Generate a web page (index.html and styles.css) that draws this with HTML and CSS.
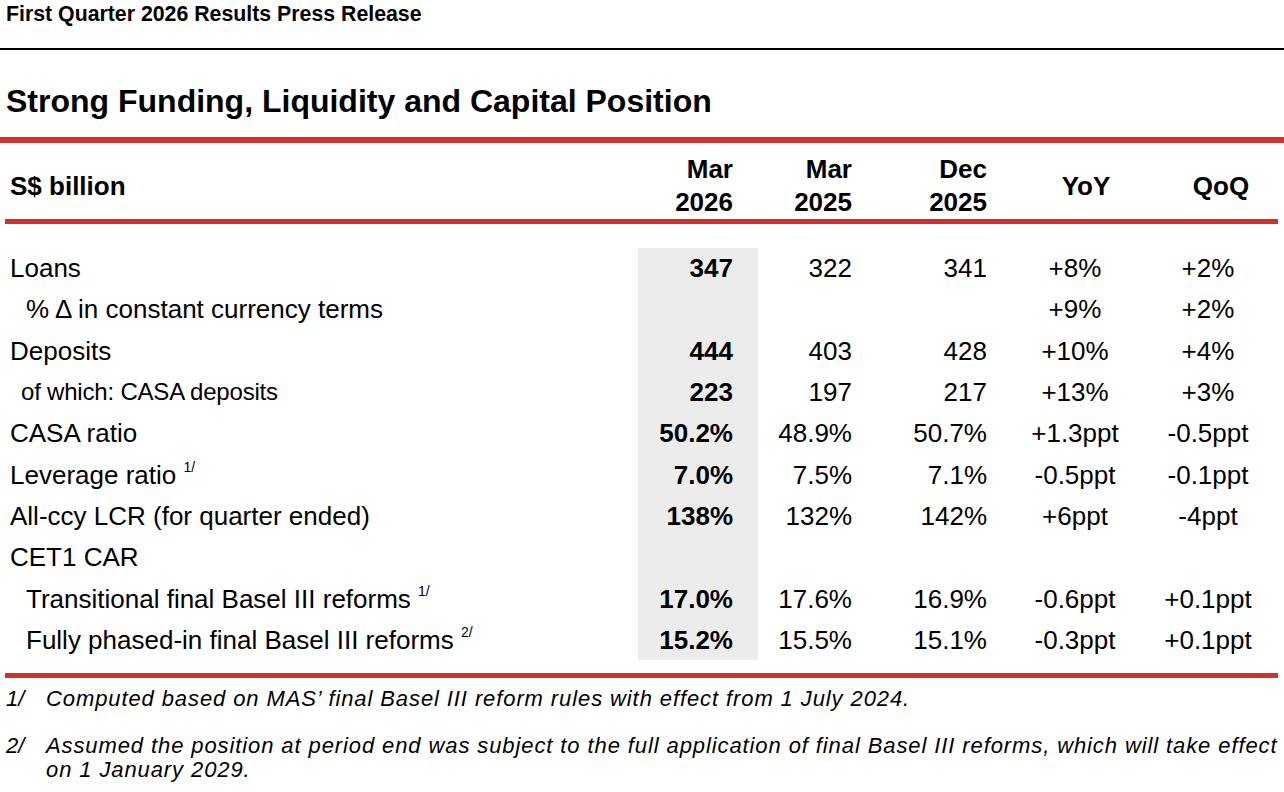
FILE: index.html
```html
<!DOCTYPE html>
<html lang="en">
<head>
    <meta charset="UTF-8">
    <meta name="viewport" content="width=device-width, initial-scale=1.0">
    <title>Strong Funding, Liquidity and Capital Position</title>
    <link rel="stylesheet" href="styles.css">
</head>
<body>
    <div class="doc-header">First Quarter 2026 Results Press Release</div>

    <h1 class="title">Strong Funding, Liquidity and Capital Position</h1>

    <table class="results">
        <thead>
            <tr>
                <th class="label">S$ billion</th>
                <th class="num hl">Mar<br>2026</th>
                <th class="num">Mar<br>2025</th>
                <th class="num wide">Dec<br>2025</th>
                <th class="chg yoy">YoY</th>
                <th class="chg qoq">QoQ</th>
            </tr>
        </thead>
        <tbody>
            <tr class="spacer"><td colspan="6"></td></tr>
            <tr>
                <td class="label">Loans</td>
                <td class="num hl">347</td>
                <td class="num">322</td>
                <td class="num">341</td>
                <td class="chg">+8%</td>
                <td class="chg">+2%</td>
            </tr>
            <tr>
                <td class="label sub">% &Delta; in constant currency terms</td>
                <td class="num hl"></td>
                <td class="num"></td>
                <td class="num"></td>
                <td class="chg">+9%</td>
                <td class="chg">+2%</td>
            </tr>
            <tr>
                <td class="label">Deposits</td>
                <td class="num hl">444</td>
                <td class="num">403</td>
                <td class="num">428</td>
                <td class="chg">+10%</td>
                <td class="chg">+4%</td>
            </tr>
            <tr>
                <td class="label small">of which: CASA deposits</td>
                <td class="num hl">223</td>
                <td class="num">197</td>
                <td class="num">217</td>
                <td class="chg">+13%</td>
                <td class="chg">+3%</td>
            </tr>
            <tr>
                <td class="label">CASA ratio</td>
                <td class="num hl">50.2%</td>
                <td class="num">48.9%</td>
                <td class="num">50.7%</td>
                <td class="chg">+1.3ppt</td>
                <td class="chg">-0.5ppt</td>
            </tr>
            <tr>
                <td class="label">Leverage ratio <sup>1/</sup></td>
                <td class="num hl">7.0%</td>
                <td class="num">7.5%</td>
                <td class="num">7.1%</td>
                <td class="chg">-0.5ppt</td>
                <td class="chg">-0.1ppt</td>
            </tr>
            <tr>
                <td class="label">All-ccy LCR (for quarter ended)</td>
                <td class="num hl">138%</td>
                <td class="num">132%</td>
                <td class="num">142%</td>
                <td class="chg">+6ppt</td>
                <td class="chg">-4ppt</td>
            </tr>
            <tr>
                <td class="label">CET1 CAR</td>
                <td class="num hl"></td>
                <td class="num"></td>
                <td class="num"></td>
                <td class="chg"></td>
                <td class="chg"></td>
            </tr>
            <tr>
                <td class="label sub">Transitional final Basel III reforms <sup>1/</sup></td>
                <td class="num hl">17.0%</td>
                <td class="num">17.6%</td>
                <td class="num">16.9%</td>
                <td class="chg">-0.6ppt</td>
                <td class="chg">+0.1ppt</td>
            </tr>
            <tr>
                <td class="label sub">Fully phased-in final Basel III reforms <sup>2/</sup></td>
                <td class="num hl">15.2%</td>
                <td class="num">15.5%</td>
                <td class="num">15.1%</td>
                <td class="chg">-0.3ppt</td>
                <td class="chg">+0.1ppt</td>
            </tr>
            <tr class="spacer end"><td colspan="6"></td></tr>
        </tbody>
    </table>

    <div class="notes">
        <div class="note">
            <span class="note-no">1/</span>
            <span>Computed based on MAS&rsquo; final Basel III reform rules with effect from 1 July 2024.</span>
        </div>
        <div class="note">
            <span class="note-no">2/</span>
            <span>Assumed the position at period end was subject to the full application of final Basel III reforms, which will take effect on 1 January 2029.</span>
        </div>
    </div>
</body>
</html>
```

FILE: styles.css
```css
body {
    margin: 0;
    padding: 0;
    background: #fff;
    color: #000;
    font-family: 'Liberation Sans', Arial, sans-serif;
    width: 1284px;
    overflow: hidden;
}

.doc-header {
    font-size: 21.3px;
    font-weight: bold;
    line-height: 24px;
    padding: 2px 6px 22px;
    border-bottom: 2px solid #000;
}

.title {
    margin: 32px 0 0;
    padding: 0 6px 17px;
    font-size: 32px;
    line-height: 38px;
    font-weight: bold;
    border-bottom: 6px solid #d2302c;
}

.results {
    margin: 0 6px 0 5px;
    width: 1273px;
    border-collapse: collapse;
    font-size: 26px;
    table-layout: fixed;
}

.results th,
.results td {
    box-sizing: border-box;
}

.results th {
    font-weight: bold;
    line-height: 33px;
    padding: 10px 0 0;
    border-bottom: 5px solid #d2302c;
    vertical-align: middle;
}

.results td {
    height: 41.3px;
    padding: 0;
    line-height: 30px;
    vertical-align: middle;
}

.results .label {
    width: 633px;
    text-align: left;
    padding-left: 5px;
}

.results .num {
    width: 119px;
    text-align: right;
    padding-right: 25px;
}

.results th.num:nth-child(2) {
    width: 120px;
}

.results .num.wide {
    width: 135px;
}

.results .chg {
    text-align: center;
}

.results th.yoy {
    width: 126px;
    padding-left: 22px;
}

.results th.qoq {
    padding-left: 26px;
}

.results td.hl {
    background-color: #ececec;
    font-weight: bold;
}

.results td.sub {
    padding-left: 21px;
}

.results td.small {
    padding-left: 16px;
    font-size: 24px;
    letter-spacing: -0.2px;
}

.results sup {
    font-size: 14px;
    vertical-align: 12px;
    line-height: 0;
}

.results .spacer td {
    height: 26px;
    background: none;
}

.results .spacer.end td {
    height: 15px;
    border-bottom: 5px solid #d2302c;
}

.notes {
    padding: 9px 6px 0;
    font-style: italic;
    font-size: 22px;
    letter-spacing: 0.9px;
    line-height: 24px;
}

.note {
    display: flex;
    margin-bottom: 23px;
}

.note-no {
    flex: 0 0 40px;
    letter-spacing: 0;
}
```
